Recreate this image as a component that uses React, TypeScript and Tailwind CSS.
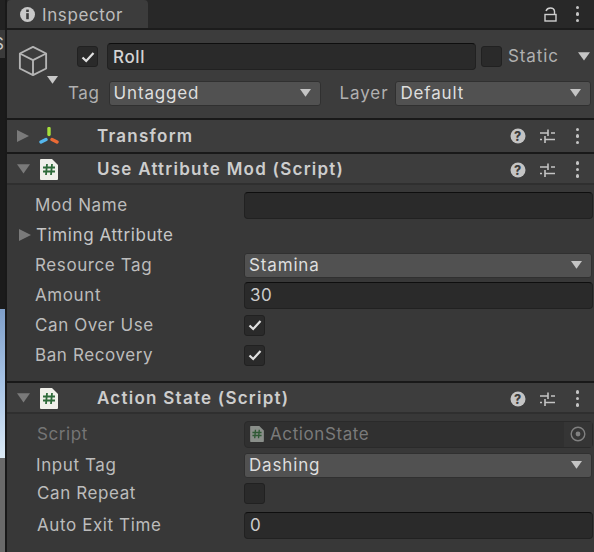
const font = { fontFamily: "Inter, 'Noto Sans', sans-serif" };

const Check = () => (
	<svg width="14" height="12" viewBox="0 0 14 12" fill="none">
		<path d="M1.5 6.5 L5.2 10 L12.5 2" stroke="#e0e0e0" strokeWidth="2.2" />
	</svg>
);

const CheckBox = ({ checked }: { checked?: boolean }) => (
	<div className="flex h-[21px] w-[21px] items-center justify-center rounded-[3px] border border-[#212121] bg-[#2a2a2a]">
		{checked && <Check />}
	</div>
);

const Caret = ({ right, color = "#c4c4c4", size = 11 }: { right?: boolean; color?: string; size?: number }) => (
	<svg width={size} height={size} viewBox="0 0 10 10" className="shrink-0">
		<path d={right ? "M0 0 L10 5 L0 10 Z" : "M0 1 L10 1 L5 8 Z"} fill={color} />
	</svg>
);

const TextField = ({ value }: { value?: string }) => (
	<div className="flex h-[27px] w-[349px] items-center rounded-[4px] border border-[#212121] border-t-[#0e0e0e] bg-[#2a2a2a] pl-[5px] text-[#cccccc]">
		{value}
	</div>
);

const Select = ({ value, className }: { value: string; className: string }) => (
	<div className={`flex h-[25px] items-center justify-between rounded-[3px] border border-[#303030] bg-[#515151] pl-[4px] pr-[9px] tracking-[0.85px] text-[#dedede] ${className}`}>
		{value}
		<Caret />
	</div>
);

const HashIcon = ({ dim }: { dim?: boolean }) => (
	<svg width={dim ? 14 : 18} height={dim ? 16 : 21} viewBox="0 0 18 21" className="shrink-0">
		<path d="M1 0 H12 L18 6 V20 Q18 21 17 21 H1 Q0 21 0 20 V1 Q0 0 1 0 Z" fill={dim ? "#8a8f8a" : "#f0f0ea"} />
		<path d="M7 5 L6 16 M12 5 L11 16 M3 8.5 H15 M3 12.5 H15" stroke={dim ? "#2f5a35" : "#2e6b3a"} strokeWidth="1.8" fill="none" />
	</svg>
);

const TransformIcon = () => (
	<svg width="20" height="18" viewBox="0 0 20 18" className="shrink-0">
		<path d="M10 1.5 V7.5" stroke="#a6e03a" strokeWidth="3.4" strokeLinecap="round" />
		<path d="M7 12.5 L2 15" stroke="#55b7ee" strokeWidth="3.4" strokeLinecap="round" />
		<path d="M13 12.5 L18 15" stroke="#ea6a35" strokeWidth="3.4" strokeLinecap="round" />
	</svg>
);

const Dots = ({ className }: { className: string }) => (
	<div className={`flex flex-col gap-[3px] ${className}`}>
		<div className="h-[3.5px] w-[3.5px] rounded-full bg-[#c4c4c4]" />
		<div className="h-[3.5px] w-[3.5px] rounded-full bg-[#c4c4c4]" />
		<div className="h-[3.5px] w-[3.5px] rounded-full bg-[#c4c4c4]" />
	</div>
);

const HeaderActions = () => (
	<div className="ml-auto flex items-center">
		<svg width="16" height="16" viewBox="0 0 16 16">
			<circle cx="8" cy="8" r="7.5" fill="#c4c4c4" />
			<text x="8" y="12.5" textAnchor="middle" fontSize="12.5" fontWeight="800" fill="#3c3c3c" style={font}>?</text>
		</svg>
		<svg width="16" height="14" viewBox="0 0 16 14" className="ml-[14px]" stroke="#c4c4c4" strokeWidth="1.6" fill="none">
			<path d="M0 4 H8 M8 0.5 V7 M11 4 H15 M0 10.5 H2 M5 7 V14 M5 10.5 H15" />
		</svg>
		<Dots className="ml-[20px] mr-[15px]" />
	</div>
);

const ComponentHeader = ({ title, icon, open, h }: { title: string; icon: React.ReactNode; open?: boolean; h: string }) => (
	<div className={`flex ${h} items-center border-b-2 ${open ? "border-[#2f2f2f] pt-[2px]" : "border-[#191919]"} bg-[#3d3d3d] pl-[10px]`}>
		<div className="flex w-[20px] justify-start">
			{open ? <Caret color="#7a7a7a" size={13} /> : <Caret right color="#7a7a7a" size={12} />}
		</div>
		<div className="flex w-[24px] justify-center">{icon}</div>
		<span className="ml-[36px] font-semibold tracking-[1.25px] text-[#cdcdcd]">{title}</span>
		<HeaderActions />
	</div>
);

const Row = ({ label, children, h = "h-[30px]", left = "pl-[28px]", color = "text-[#bcbcbc]" }: { label: string; children?: React.ReactNode; h?: string; left?: string; color?: string }) => (
	<div className={`flex ${h} items-center ${left}`}>
		<span className={color}>{label}</span>
		<div className="ml-auto flex w-[350px] items-center">{children}</div>
	</div>
);

export default function App() {
	return (
		<div className="flex h-[552px] w-[594px] overflow-hidden bg-[#1d1d1d] text-[17px] leading-none tracking-[0.6px]" style={font}>
			{/* window behind the inspector */}
			<div className="flex w-[5px] shrink-0 flex-col">
				<div className="h-[30px] bg-[#222222]" />
				<div className="flex h-[28px] items-center overflow-hidden bg-[#3a3a3a] text-[#c8c8c8]"><span className="-ml-[7px]">S</span></div>
				<div className="h-[251px] bg-[#1b1b1b]" />
				<div className="h-[149px] bg-gradient-to-b from-[#7f9fc9] via-[#a8c4e6] to-[#dbe9f5]" />
				<div className="flex-1 bg-[#6a6a6a]" />
			</div>
			<div className="flex w-[2px] shrink-0 bg-[#191919]" />
			<div className="flex min-w-0 flex-1 flex-col">
				{/* tab bar */}
				<div className="flex h-[28px] items-end bg-[#282828]">
					<div className="flex h-[28px] w-[141px] items-center rounded-t-[4px] bg-[#3c3c3c] pl-[13px] text-[#bdbdbd]">
						<svg width="15" height="15" viewBox="0 0 15 15" className="shrink-0">
							<circle cx="7.5" cy="7.5" r="7.5" fill="#c8c8c8" />
							<rect x="6.2" y="6.2" width="2.6" height="6" fill="#3c3c3c" />
							<rect x="6.2" y="2.6" width="2.6" height="2.4" fill="#3c3c3c" />
						</svg>
						<span className="ml-[7px] mt-[2px]">Inspector</span>
					</div>
					<div className="ml-auto flex h-[28px] items-center">
						<svg width="13" height="15" viewBox="0 0 13 15" fill="none" stroke="#cfcfcf" strokeWidth="1.4">
							<rect x="1" y="7.5" width="11" height="6.5" />
							<path d="M2 4 Q3 1 6.5 1 Q10 1 10.5 4 V7.5" />
						</svg>
						<Dots className="ml-[19px] mr-[15px]" />
					</div>
				</div>
				<div className="h-[2px] bg-[#1c1c1c]" />

				{/* object header */}
				<div className="flex h-[90px] border-b-[2px] border-[#191919] bg-[#3c3c3c]">
					<div className="relative w-[61px] shrink-0 pl-[11px] pt-[15px]">
						<svg width="30" height="32" viewBox="0 0 32 34" fill="none" stroke="#b4b4b4" strokeWidth="2" strokeLinejoin="round">
							<path d="M16 2 L30 9 V25 L16 32 L2 25 V9 Z M2 9 L16 16 L30 9 M16 16 V32" />
						</svg>
						<div className="absolute left-[40px] top-[45px]"><Caret color="#c8c8c8" size={11} /></div>
					</div>
					<div className="min-w-0 flex-1 pt-[13px]">
						<div className="flex items-center">
							<div className="ml-[9px]"><CheckBox checked /></div>
							<div className="ml-[9px] flex h-[27px] w-[369px] items-center rounded-[4px] border border-[#212121] border-t-[#0e0e0e] bg-[#2a2a2a] pl-[5px] font-medium text-[#d4d4d4]"><span className="mt-[1px]">Roll</span></div>
							<div className="ml-[5px]"><CheckBox /></div>
							<span className="ml-[6px] tracking-[0.9px] text-[#b0b0b0]">Static</span>
							<div className="ml-[19px]"><Caret size={12} /></div>
						</div>
						<div className="mt-[11px] flex items-center">
							<span className="text-[#b0b0b0]">Tag</span>
							<Select value="Untagged" className="ml-[9px] w-[212px]" />
							<span className="ml-[19px] tracking-[0.9px] text-[#b0b0b0]">Layer</span>
							<Select value="Default" className="ml-[7px] w-[196px]" />
						</div>
					</div>
				</div>

				<ComponentHeader title="Transform" icon={<TransformIcon />} h="h-[34px]" />

				<ComponentHeader open title="Use Attribute Mod (Script)" icon={<HashIcon />} h="h-[31px]" />
				<div className="h-[198px] border-b-[2px] border-[#191919] bg-[#383838] pt-[5px]">
					<Row label="Mod Name"><TextField /></Row>
					<div className="flex h-[30px] items-center pl-[12px] text-[#c6c6c6]">
						<Caret right color="#7a7a7a" size={12} />
						<span className="ml-[5px]">Timing Attribute</span>
					</div>
					<Row label="Resource Tag"><Select value="Stamina" className="w-[348px]" /></Row>
					<Row label="Amount"><TextField value="30" /></Row>
					<Row label="Can Over Use"><CheckBox checked /></Row>
					<Row label="Ban Recovery"><CheckBox checked /></Row>
				</div>

				<ComponentHeader open title="Action State (Script)" icon={<HashIcon />} h="h-[31px]" />
				<div className="flex-1 bg-[#383838] pt-[6px]">
					<Row label="Script" h="h-[28px]" left="pl-[30px]" color="text-[#757575]">
						<div className="flex h-[27px] w-[349px] items-center rounded-[4px] border border-[#2a2a2a] bg-[#303030] pl-[5px] text-[#7a7a7a]">
							<HashIcon dim />
							<span className="ml-[6px]">ActionState</span>
							<div className="ml-auto flex h-full w-[28px] items-center justify-center bg-[#353535]">
								<svg width="16" height="16" viewBox="0 0 16 16" fill="none">
									<circle cx="8" cy="8" r="6.8" stroke="#808080" strokeWidth="1.4" />
									<circle cx="8" cy="8" r="2.4" fill="#808080" />
								</svg>
							</div>
						</div>
					</Row>
					<div className="h-[4px]" />
					<Row label="Input Tag" h="h-[26px]" left="pl-[29px]"><Select value="Dashing" className="w-[348px]" /></Row>
					<Row label="Can Repeat" h="h-[30px]" left="pl-[30px]"><CheckBox /></Row>
					<div className="h-[2px]" />
					<Row label="Auto Exit Time" h="h-[31px]" left="pl-[30px]"><TextField value="0" /></Row>
				</div>
			</div>
		</div>
	);
}
